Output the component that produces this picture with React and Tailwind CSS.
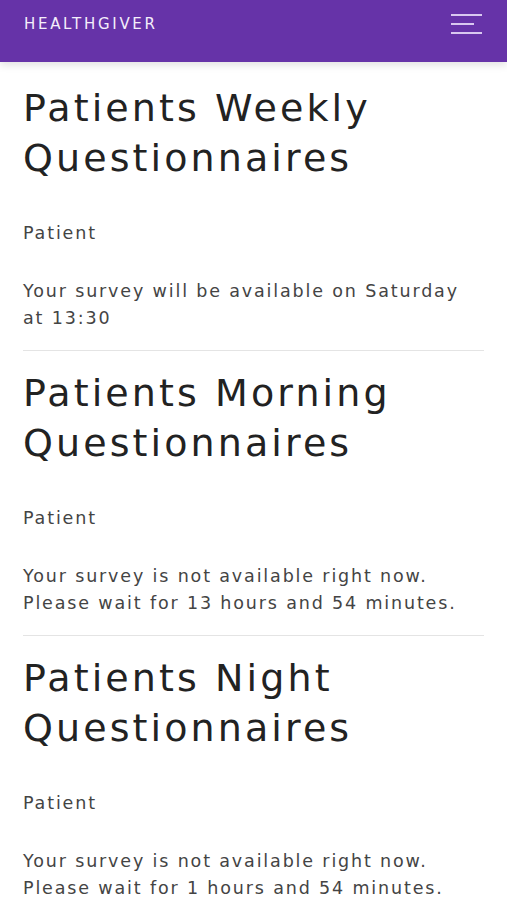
import React from 'react';

const surveys = [
  {
    title: ['Patients Weekly', 'Questionnaires'],
    role: 'Patient',
    message: ['Your survey will be available on Saturday', 'at 13:30'],
  },
  {
    title: ['Patients Morning', 'Questionnaires'],
    role: 'Patient',
    message: ['Your survey is not available right now.', 'Please wait for 13 hours and 54 minutes.'],
  },
  {
    title: ['Patients Night', 'Questionnaires'],
    role: 'Patient',
    message: ['Your survey is not available right now.', 'Please wait for 1 hours and 54 minutes.'],
  },
];

function SurveyCard({ survey, last }) {
  return (
    <section className={last ? 'pt-[17px]' : 'pt-[17px] pb-[18px] border-b border-[#e4e4e4]'}>
      <h2 className="text-[38px] leading-[50px] font-normal text-[#222] tracking-[3.1px] whitespace-nowrap">
        {survey.title[0]}
        <br />
        {survey.title[1]}
      </h2>
      <p className="mt-[37px] text-[17.5px] leading-[27px] text-[#444] tracking-[1.85px]">{survey.role}</p>
      <p className="mt-[31px] text-[17.5px] leading-[27px] text-[#444] tracking-[1.85px] whitespace-nowrap">
        {survey.message[0]}
        <br />
        {survey.message[1]}
      </p>
    </section>
  );
}

export default function App() {
  return (
    <div className="min-h-[900px] bg-white font-['DejaVu_Sans',sans-serif]">
      {/* Header */}
      <header className="h-[62px] bg-[#6633a8] flex items-center justify-between pl-6 pr-[25px] shadow-[0_3px_8px_rgba(0,0,0,0.12)] relative">
        <span className="text-[#f4eefb] text-[15px] tracking-[2.7px] -mt-[14px]">HEALTHGIVER</span>
        <button className="flex flex-col gap-[7px] -mt-[14px]" aria-label="Menu">
          <span className="block w-[31px] h-[2px] bg-[#d9c8f0]" />
          <span className="block w-[23px] h-[2px] bg-[#d9c8f0]" />
          <span className="block w-[31px] h-[2px] bg-[#d9c8f0]" />
        </button>
      </header>

      {/* Surveys */}
      <main className="px-[23px] pt-[4px]">
        {surveys.map((s, i) => (
          <SurveyCard key={i} survey={s} last={i === surveys.length - 1} />
        ))}
      </main>
    </div>
  );
}
